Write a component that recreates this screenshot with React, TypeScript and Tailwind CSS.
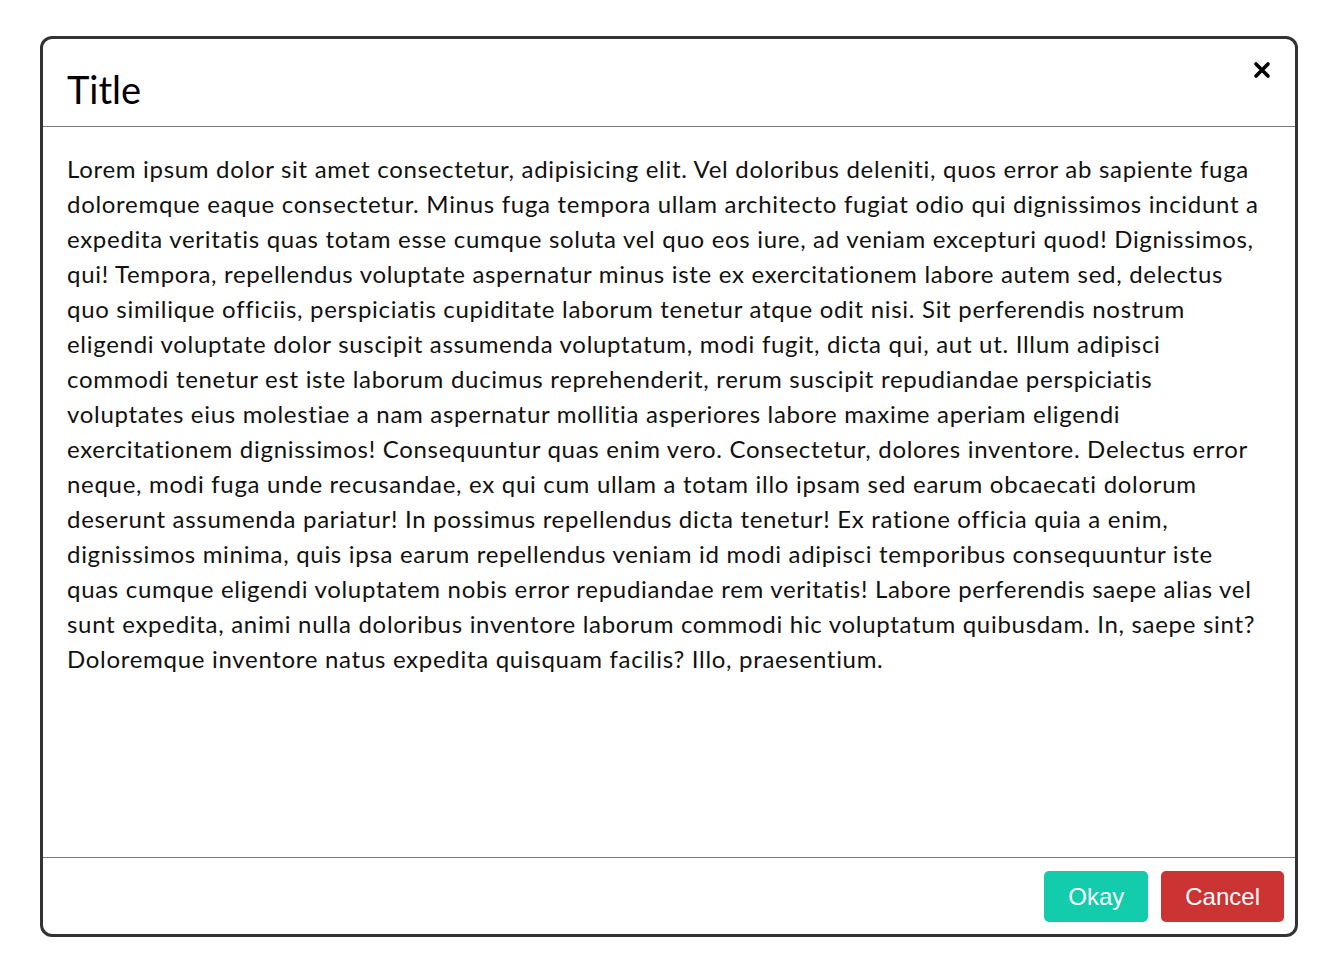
import React from 'react'

const lines = [
  'Lorem ipsum dolor sit amet consectetur, adipisicing elit. Vel doloribus deleniti, quos error ab sapiente fuga',
  'doloremque eaque consectetur. Minus fuga tempora ullam architecto fugiat odio qui dignissimos incidunt a',
  'expedita veritatis quas totam esse cumque soluta vel quo eos iure, ad veniam excepturi quod! Dignissimos,',
  'qui! Tempora, repellendus voluptate aspernatur minus iste ex exercitationem labore autem sed, delectus',
  'quo similique officiis, perspiciatis cupiditate laborum tenetur atque odit nisi. Sit perferendis nostrum',
  'eligendi voluptate dolor suscipit assumenda voluptatum, modi fugit, dicta qui, aut ut. Illum adipisci',
  'commodi tenetur est iste laborum ducimus reprehenderit, rerum suscipit repudiandae perspiciatis',
  'voluptates eius molestiae a nam aspernatur mollitia asperiores labore maxime aperiam eligendi',
  'exercitationem dignissimos! Consequuntur quas enim vero. Consectetur, dolores inventore. Delectus error',
  'neque, modi fuga unde recusandae, ex qui cum ullam a totam illo ipsam sed earum obcaecati dolorum',
  'deserunt assumenda pariatur! In possimus repellendus dicta tenetur! Ex ratione officia quia a enim,',
  'dignissimos minima, quis ipsa earum repellendus veniam id modi adipisci temporibus consequuntur iste',
  'quas cumque eligendi voluptatem nobis error repudiandae rem veritatis! Labore perferendis saepe alias vel',
  'sunt expedita, animi nulla doloribus inventore laborum commodi hic voluptatum quibusdam. In, saepe sint?',
  'Doloremque inventore natus expedita quisquam facilis? Illo, praesentium.',
]

const CloseIcon = () => (
  <svg width="18" height="18" viewBox="0 0 18 18" aria-hidden="true">
    <path d="M3 3 L15 15 M15 3 L3 15" stroke="#000" strokeWidth="3.6" strokeLinecap="round" />
  </svg>
)

export default function App() {
  return (
    <div className="min-h-screen bg-white pt-[36px] pl-[40px] pr-[36px] pb-[28px]">
      <div className="flex h-[901px] w-[1258px] flex-col rounded-[12px] border-[3px] border-[#333] bg-white">
        <div className="flex h-[88px] items-start justify-between border-b border-[#777] pl-[24px] pr-[24px]">
          <h1 className="mt-[27px] text-[38px] leading-[46px] text-black font-['Lato',sans-serif]">Title</h1>
          <button className="mt-[22px] p-0">
            <CloseIcon />
          </button>
        </div>
        <div className="flex-1 px-[24px] pt-[24px]">
          <p className="text-[24px] leading-[35px] tracking-[0.7px] text-[#111] font-['Lato',sans-serif]">
            {lines.map((line, i) => (
              <span key={i} className="block whitespace-nowrap">
                {line}
              </span>
            ))}
          </p>
        </div>
        <div className="flex justify-end gap-[13px] border-t border-[#777] pt-[13px] pb-[12px] pr-[11px]">
          <button className="rounded-[5px] bg-[#12ccac] px-[24px] py-[12px] text-[24px] leading-[27px] text-white font-['Liberation_Sans',Arial,sans-serif]">
            Okay
          </button>
          <button className="rounded-[5px] bg-[#cc3333] px-[24px] py-[12px] text-[24px] leading-[27px] text-white font-['Liberation_Sans',Arial,sans-serif]">
            Cancel
          </button>
        </div>
      </div>
    </div>
  )
}
